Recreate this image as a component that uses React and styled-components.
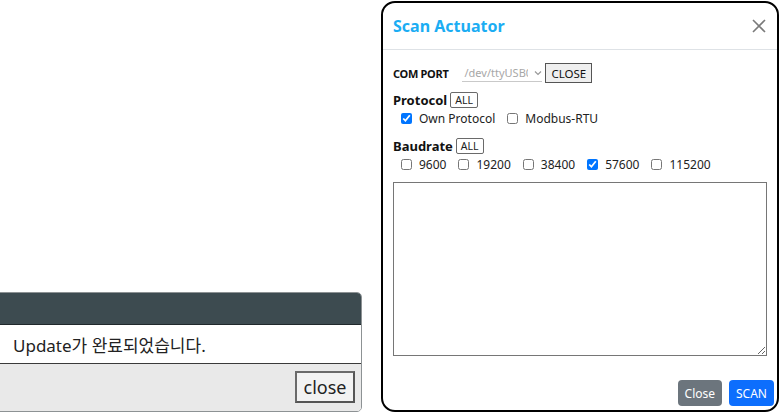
import React from 'react';
import styled, { createGlobalStyle } from 'styled-components';

const GlobalStyle = createGlobalStyle`
  html, body {
    margin: 0;
    padding: 0;
    background: #ffffff;
  }
  body {
    font-family: 'Noto Sans', 'Noto Sans CJK KR', sans-serif;
    color: #212529;
  }
`;

const Page = styled.div`
  position: relative;
  width: 780px;
  height: 413px;
  overflow: hidden;
`;

/* left alert window, partly off screen */
const AlertWindow = styled.div`
  position: absolute;
  left: -40px;
  top: 292px;
  width: 400px;
  height: 118px;
  border: 1px solid #8d9294;
  border-radius: 5px;
  overflow: hidden;
  display: flex;
  flex-direction: column;
  background: #ffffff;
`;

const AlertTitleBar = styled.div`
  height: 31px;
  background: #3d4b50;
  border-bottom: 1px solid #20282b;
`;

const AlertMessage = styled.div`
  height: 38px;
  display: flex;
  align-items: center;
  padding-left: 52px;
  font-family: 'Noto Sans', 'Noto Sans CJK KR', sans-serif;
  font-size: 17px;
  color: #222;
  border-bottom: 1px solid #3a3a3a;
`;

const AlertFooter = styled.div`
  flex: 1;
  background: #e9e9e9;
  display: flex;
  justify-content: flex-end;
  align-items: center;
  padding-right: 6px;
`;

const AlertButton = styled.button`
  width: 60px;
  height: 32px;
  margin-top: -2px;
  background: #f2f2f2;
  border: 2px solid #555;
  border-top-color: #6a6a6a;
  border-left-color: #6a6a6a;
  font-family: 'Noto Sans', sans-serif;
  font-size: 18px;
  color: #222;
  padding: 0;
`;

/* scan modal */
const Modal = styled.div`
  position: absolute;
  left: 381px;
  top: 1px;
  width: 398px;
  height: 411px;
  box-sizing: border-box;
  border: 2px solid #000;
  border-radius: 14px;
  background: #fff;
  display: flex;
  flex-direction: column;
`;

const ModalHeader = styled.div`
  height: 46px;
  display: flex;
  align-items: center;
  justify-content: space-between;
  padding: 0 10px;
  border-bottom: 1px solid #dee2e6;
`;

const ModalTitle = styled.h5`
  margin: 0;
  font-size: 16px;
  font-weight: 700;
  color: #1badf3;
`;

const CloseX = styled.button`
  width: 16px;
  height: 16px;
  padding: 0;
  border: none;
  background: none;
  display: flex;
  align-items: center;
  justify-content: center;
`;

const ModalBody = styled.div`
  flex: 1;
  padding: 13px 10px 0;
  display: flex;
  flex-direction: column;
`;

const PortRow = styled.div`
  display: flex;
  align-items: center;
  height: 20px;
  margin-bottom: 8px;
`;

const FieldLabel = styled.span`
  font-size: ${p => (p.small ? '11px' : '13px')};
  letter-spacing: ${p => (p.small ? '-0.3px' : '0')};
  font-weight: 700;
  color: #111;
  margin-right: ${p => p.gap || 3}px;
`;

const PortSelect = styled.div`
  width: 80px;
  height: 18px;
  box-sizing: border-box;
  border-bottom: 1px solid #c9c9c9;
  display: flex;
  align-items: center;
  justify-content: space-between;
  font-size: 11px;
  color: #a7a7a7;
  overflow: hidden;
  white-space: nowrap;
  margin-right: 3px;
  padding-left: 2px;
`;

const PortText = styled.span`
  overflow: hidden;
  width: 64px;
`;

const GrayButton = styled.button`
  height: 20px;
  padding: 0 5px;
  background: #efefef;
  border: 1px solid #555;
  border-radius: 0;
  font-family: 'Noto Sans', sans-serif;
  font-size: 11.5px;
  color: #111;
`;

const SectionHead = styled.div`
  display: flex;
  align-items: center;
  height: 18px;
`;

const AllButton = styled.button`
  height: 16px;
  padding: 0 4px;
  background: #fff;
  border: 1px solid #6a6a6a;
  border-radius: 2px;
  font-family: 'Noto Sans', sans-serif;
  font-size: 10.5px;
  color: #222;
  line-height: 14px;
`;

const CheckRow = styled.div`
  display: flex;
  align-items: center;
  height: 18px;
  padding-left: 8px;
  margin-bottom: ${p => p.mb || 0}px;
`;

const CheckItem = styled.label`
  display: flex;
  align-items: center;
  font-size: 12px;
  color: #222;
  margin-right: 12px;
  input {
    width: 11px;
    height: 11px;
    margin: 0 7px 0 0;
  }
`;

const LogArea = styled.textarea`
  margin-top: 9px;
  width: 374px;
  height: 174px;
  box-sizing: border-box;
  border: 1px solid #767676;
  border-radius: 0;
  resize: both;
`;

const ModalFooter = styled.div`
  display: flex;
  justify-content: flex-end;
  gap: 7px;
  padding: 0 3px 4px 0;
`;

const FooterButton = styled.button`
  height: 26px;
  padding: 0 7px;
  border: none;
  border-radius: 4px;
  font-family: 'Noto Sans', sans-serif;
  font-size: 12px;
  color: #fff;
  background: ${p => (p.primary ? '#0d6efd' : '#6c757d')};
`;

const Check = ({ label, checked }) => (
  <CheckItem>
    <input type="checkbox" defaultChecked={checked} />
    {label}
  </CheckItem>
);

const App = () => (
  <Page>
    <GlobalStyle />
    <AlertWindow>
      <AlertTitleBar />
      <AlertMessage>Update가 완료되었습니다.</AlertMessage>
      <AlertFooter>
        <AlertButton>close</AlertButton>
      </AlertFooter>
    </AlertWindow>

    <Modal>
      <ModalHeader>
        <ModalTitle>Scan Actuator</ModalTitle>
        <CloseX aria-label="close">
          <svg width="14" height="14" viewBox="0 0 14 14">
            <path d="M1 1L13 13M13 1L1 13" stroke="#7a7a7a" strokeWidth="1.6" />
          </svg>
        </CloseX>
      </ModalHeader>
      <ModalBody>
        <PortRow>
          <FieldLabel small gap={14}>COM PORT</FieldLabel>
          <PortSelect>
            <PortText>/dev/ttyUSB0</PortText>
            <svg width="8" height="6" viewBox="0 0 8 6">
              <path d="M1 1.5L4 4.5L7 1.5" stroke="#999" strokeWidth="1.2" fill="none" />
            </svg>
          </PortSelect>
          <GrayButton>CLOSE</GrayButton>
        </PortRow>
        <SectionHead>
          <FieldLabel>Protocol</FieldLabel>
          <AllButton>ALL</AllButton>
        </SectionHead>
        <CheckRow mb={10}>
          <Check label="Own Protocol" checked />
          <Check label="Modbus-RTU" />
        </CheckRow>
        <SectionHead>
          <FieldLabel>Baudrate</FieldLabel>
          <AllButton>ALL</AllButton>
        </SectionHead>
        <CheckRow>
          <Check label="9600" />
          <Check label="19200" />
          <Check label="38400" />
          <Check label="57600" checked />
          <Check label="115200" />
        </CheckRow>
        <LogArea />
      </ModalBody>
      <ModalFooter>
        <FooterButton>Close</FooterButton>
        <FooterButton primary>SCAN</FooterButton>
      </ModalFooter>
    </Modal>
  </Page>
);

export default App;
